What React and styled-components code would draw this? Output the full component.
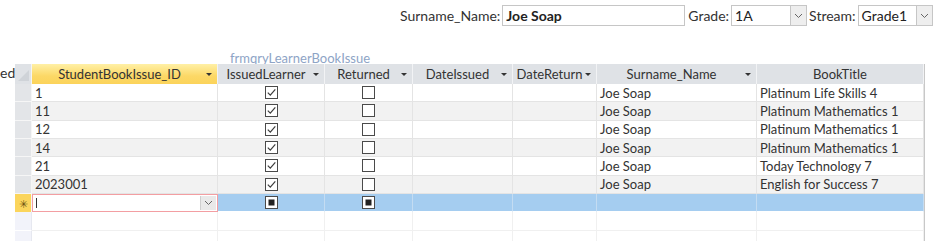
import React from "react";
import styled, { createGlobalStyle } from "styled-components";

const GlobalStyle = createGlobalStyle`
  html, body {
    margin: 0;
    padding: 0;
    background: #ffffff;
  }
  body {
    font-family: "Lato", "Open Sans", sans-serif;
    font-size: 14px;
    color: #333333;
  }
`;

const rows = [
  { id: "1", issued: true, returned: false, name: "Joe Soap", title: "Platinum Life Skills 4" },
  { id: "11", issued: true, returned: false, name: "Joe Soap", title: "Platinum Mathematics 1" },
  { id: "12", issued: true, returned: false, name: "Joe Soap", title: "Platinum Mathematics 1" },
  { id: "14", issued: true, returned: false, name: "Joe Soap", title: "Platinum Mathematics 1" },
  { id: "21", issued: true, returned: false, name: "Joe Soap", title: "Today Technology 7" },
  { id: "2023001", issued: true, returned: false, name: "Joe Soap", title: "English for Success 7" },
];

const columns = [
  { label: "StudentBookIssue_ID", arrow: true },
  { label: "IssuedLearner", arrow: true },
  { label: "Returned", arrow: true },
  { label: "DateIssued", arrow: true },
  { label: "DateReturn", arrow: true },
  { label: "Surname_Name", arrow: true },
  { label: "BookTitle", arrow: false },
];

const App = () => {
  return (
    <Page>
      <GlobalStyle />
      <FilterBar>
        <Label>Surname_Name:</Label>
        <TextBox>Joe Soap</TextBox>
        <Label>Grade:</Label>
        <Combo width={76}>
          <ComboText>1A</ComboText>
          <ComboButton>
            <Chevron />
          </ComboButton>
        </Combo>
        <Label>Stream:</Label>
        <Combo width={75}>
          <ComboText>Grade1</ComboText>
          <ComboButton>
            <Chevron />
          </ComboButton>
        </Combo>
      </FilterBar>

      <FormTitle>frmqryLearnerBookIssue</FormTitle>

      <SheetRow>
        <CutLabel>ed</CutLabel>
        <Sheet>
          <Corner>
            <svg width="17" height="20" viewBox="0 0 17 20">
              <polygon points="14,6 14,17 3,17" fill="#cfd3d8" />
            </svg>
          </Corner>
          {columns.map((c, i) => (
            <HeadCell key={c.label} active={i === 0} arrow={c.arrow}>
              <span>{c.label}</span>
              {c.arrow && <HeadArrow />}
            </HeadCell>
          ))}

          {rows.map((r, i) => (
            <React.Fragment key={r.id}>
              <Selector />
              <Cell alt={i % 2 === 1}>{r.id}</Cell>
              <Cell alt={i % 2 === 1} center>
                <Check state={r.issued ? "on" : "off"} />
              </Cell>
              <Cell alt={i % 2 === 1} center>
                <Check state={r.returned ? "on" : "off"} />
              </Cell>
              <Cell alt={i % 2 === 1} />
              <Cell alt={i % 2 === 1} />
              <Cell alt={i % 2 === 1}>{r.name}</Cell>
              <Cell alt={i % 2 === 1}>{r.title}</Cell>
            </React.Fragment>
          ))}

          <NewSelector>
            <span>✳</span>
          </NewSelector>
          <EditCell>
            <Caret />
            <EditButton>
              <Chevron />
            </EditButton>
          </EditCell>
          <NewCell center>
            <Check state="null" />
          </NewCell>
          <NewCell center>
            <Check state="null" />
          </NewCell>
          <NewCell />
          <NewCell />
          <NewCell />
          <NewCell />

          {[0, 1].map((k) => (
            <React.Fragment key={k}>
              <EmptySelector />
              <EmptyCell />
              <EmptyCell />
              <EmptyCell />
              <EmptyCell />
              <EmptyCell />
              <EmptyCell />
              <EmptyCell />
            </React.Fragment>
          ))}
        </Sheet>
      </SheetRow>
    </Page>
  );
};

const Check = ({ state }) => (
  <svg width="13" height="13" viewBox="0 0 13 13">
    <rect x="0.5" y="0.5" width="12" height="12" fill="#ffffff" stroke="#4a4a4a" />
    {state === "on" && (
      <polyline points="2.8,6.6 5.3,9.2 10.3,3.4" fill="none" stroke="#3c3c3c" strokeWidth="1.2" />
    )}
    {state === "null" && <rect x="3.5" y="3.5" width="6" height="6" fill="#222222" />}
  </svg>
);

const Chevron = () => (
  <svg width="9" height="6" viewBox="0 0 9 6">
    <polyline points="1,1 4.5,4.5 8,1" fill="none" stroke="#666666" strokeWidth="1" />
  </svg>
);

export default App;

const Page = styled.div`
  width: 939px;
  height: 241px;
  overflow: hidden;
`;

const FilterBar = styled.div`
  display: flex;
  align-items: center;
  height: 21px;
  padding: 5px 0 0 400px;
`;

const Label = styled.span`
  font-size: 14px;
  color: #333333;
  margin-right: 2px;
  white-space: nowrap;
`;

const TextBox = styled.div`
  box-sizing: border-box;
  width: 183px;
  height: 21px;
  border: 1px solid #c6c6c6;
  padding: 1px 3px;
  font-weight: 700;
  font-size: 14px;
  color: #222222;
  margin-right: 3px;
`;

const Combo = styled.div`
  box-sizing: border-box;
  display: flex;
  width: ${(p) => p.width}px;
  height: 21px;
  border: 1px solid #c6c6c6;
  margin-right: 2px;
`;

const ComboText = styled.div`
  flex: 1;
  padding: 1px 3px;
  font-size: 14px;
  color: #222222;
`;

const ComboButton = styled.div`
  width: 15px;
  display: flex;
  align-items: center;
  justify-content: center;
  background: #eeeeee;
  border-left: 1px solid #c6c6c6;
`;

const FormTitle = styled.div`
  height: 38px;
  box-sizing: border-box;
  padding: 25px 0 0 230px;
  font-size: 13px;
  line-height: 14px;
  color: #8ea4c6;
`;

const SheetRow = styled.div`
  display: flex;
  align-items: flex-start;
`;

const CutLabel = styled.div`
  width: 15px;
  overflow: hidden;
  font-size: 14px;
  line-height: 18px;
  color: #333333;
`;

const Sheet = styled.div`
  display: grid;
  grid-template-columns: 17px 186px 107px 88px 100px 84px 160px 167px;
  grid-template-rows: 20px repeat(9, 18.33px);
  border-right: 1px solid #c8c8c8;
`;

const Corner = styled.div`
  background: #dfe2e6;
  border-right: 1px solid #f4f4f4;
  svg {
    display: block;
  }
`;

const HeadCell = styled.div`
  position: relative;
  display: flex;
  align-items: center;
  justify-content: center;
  box-sizing: border-box;
  padding-right: ${(p) => (p.arrow ? "10px" : "0")};
  border-right: 1px solid #f2f3f5;
  background: ${(p) =>
    p.active ? "linear-gradient(#fff0a6, #fcd866 60%, #fbd35a)" : "#dfe2e6"};
  font-size: 13px;
  color: #333333;
  white-space: nowrap;
  overflow: hidden;
`;

const HeadArrow = styled.span`
  position: absolute;
  right: 5px;
  top: 9px;
  width: 0;
  height: 0;
  border-left: 3px solid transparent;
  border-right: 3px solid transparent;
  border-top: 3px solid #333333;
`;

const Selector = styled.div`
  background: #e3e5e8;
  border-bottom: 1px solid #f6f6f6;
  border-right: 1px solid #f6f6f6;
`;

const Cell = styled.div`
  display: flex;
  align-items: center;
  justify-content: ${(p) => (p.center ? "center" : "flex-start")};
  box-sizing: border-box;
  padding: 0 3px;
  background: ${(p) => (p.alt ? "#f2f2f2" : "#ffffff")};
  border-right: 1px solid #e4e4e4;
  border-bottom: 1px solid #e4e4e4;
  font-size: 13px;
  color: #333333;
  white-space: nowrap;
  overflow: hidden;
  svg {
    display: block;
  }
`;

const NewSelector = styled.div`
  display: flex;
  align-items: center;
  justify-content: center;
  background: #fbd55c;
  border-right: 1px solid #f6f6f6;
  span {
    font-size: 11px;
    color: #6e5512;
    line-height: 1;
  }
`;

const EditCell = styled.div`
  display: flex;
  align-items: stretch;
  box-sizing: border-box;
  border: 1px solid #f39ea2;
  background: #ffffff;
  padding-left: 3px;
`;

const Caret = styled.div`
  width: 1px;
  margin: 3px auto 3px 0;
  background: #333333;
`;

const EditButton = styled.div`
  width: 15px;
  margin: 1px;
  display: flex;
  align-items: center;
  justify-content: center;
  background: #e9e9e9;
  border-left: 1px solid #cfcfcf;
`;

const NewCell = styled(Cell)`
  background: #a5cdf0;
  border-right: 1px solid #c4dcf2;
  border-bottom: 1px solid #ffffff;
`;

const EmptySelector = styled.div`
  background: #f2f3fa;
  border-right: 1px solid #e6e8f0;
  border-bottom: 1px solid #ffffff;
`;

const EmptyCell = styled.div`
  background: #ffffff;
  border-right: 1px solid #f0f0f0;
  border-bottom: 1px solid #f0f0f0;
`;
